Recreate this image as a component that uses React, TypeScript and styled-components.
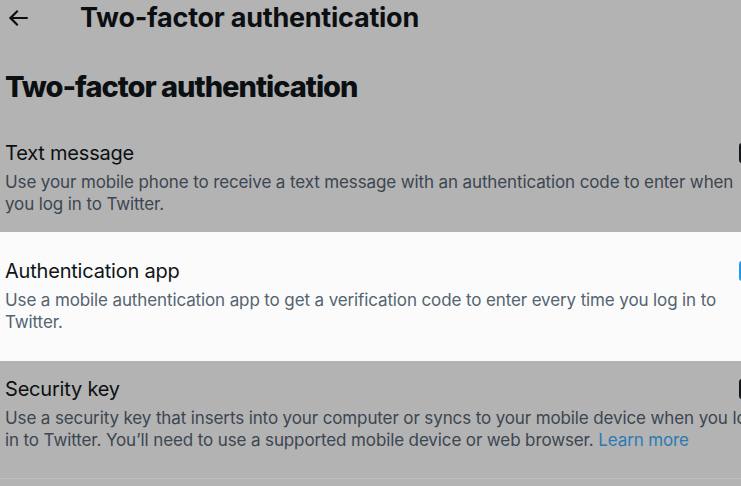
import styled, { createGlobalStyle } from 'styled-components'

const GlobalStyle = createGlobalStyle`
  html, body {
    margin: 0;
    padding: 0;
    background: #b3b3b3;
  }
  body {
    font-family: Inter, "Liberation Sans", Arial, sans-serif;
    -webkit-font-smoothing: antialiased;
  }
`

interface Method {
  title: string
  description: string
  link?: string
  checked: boolean
  highlight: boolean
}

const methods: Method[] = [
  {
    title: 'Text message',
    description:
      'Use your mobile phone to receive a text message with an authentication code to enter when you log in to Twitter.',
    checked: false,
    highlight: false,
  },
  {
    title: 'Authentication app',
    description:
      'Use a mobile authentication app to get a verification code to enter every time you log in to Twitter.',
    checked: true,
    highlight: true,
  },
  {
    title: 'Security key',
    description:
      'Use a security key that inserts into your computer or syncs to your mobile device when you log in to Twitter. You’ll need to use a supported mobile device or web browser.',
    link: 'Learn more',
    checked: false,
    highlight: false,
  },
]

const BackArrow = () => (
  <svg width="26" height="26" viewBox="0 0 24 24" aria-hidden="true">
    <path
      fill="#0c0f12"
      d="M7.414 13l5.043 5.04-1.414 1.42L3.586 12l7.457-7.46 1.414 1.42L7.414 11H21v2H7.414z"
    />
  </svg>
)

export default function App() {
  return (
    <Frame>
      <GlobalStyle />
      <Page>
        <TopBar>
          <BackButton>
            <BackArrow />
          </BackButton>
          <TopTitle>Two-factor authentication</TopTitle>
        </TopBar>
        <Heading>Two-factor authentication</Heading>
        <List>
          {methods.map((m) => (
            <Row key={m.title} $highlight={m.highlight}>
              <TitleLine>
                <RowTitle $highlight={m.highlight}>{m.title}</RowTitle>
                <Checkbox $checked={m.checked} />
              </TitleLine>
              <Description $highlight={m.highlight}>
                {m.description}
                {m.link && (
                  <>
                    {' '}
                    <Link $highlight={m.highlight}>{m.link}</Link>
                  </>
                )}
              </Description>
            </Row>
          ))}
        </List>
      </Page>
    </Frame>
  )
}

const Frame = styled.div`
  width: 741px;
  height: 486px;
  overflow: hidden;
  background: #b3b3b3;
`

const Page = styled.div`
  width: 766px;
`

const TopBar = styled.header`
  display: flex;
  align-items: center;
  height: 36px;
`

const BackButton = styled.div`
  display: flex;
  align-items: center;
  width: 26px;
  height: 26px;
  margin-left: 5px;
  margin-right: 49px;
`

const TopTitle = styled.h1`
  margin: 0;
  font-size: 27px;
  line-height: 36px;
  font-weight: 700;
  letter-spacing: -0.25px;
  color: #0c0f12;
`

const Heading = styled.h2`
  margin: 33px 0 20px 5px;
  font-size: 29px;
  line-height: 36px;
  font-weight: 800;
  letter-spacing: -1px;
  color: #0c0f12;
`

const List = styled.div`
  display: flex;
  flex-direction: column;
  padding-bottom: 10px;
  border-bottom: 1px solid #bebebe;
`

const Row = styled.div<{ $highlight: boolean }>`
  display: flex;
  flex-direction: column;
  gap: 6px;
  padding: ${(p) => (p.$highlight ? '27px 0 28px 5px' : '16px 0 17px 5px')};
  background: ${(p) => (p.$highlight ? '#fbfbfb' : 'transparent')};
`

const TitleLine = styled.div`
  display: flex;
  align-items: center;
  justify-content: space-between;
  height: 24px;
  width: 754px;
`

const RowTitle = styled.span<{ $highlight: boolean }>`
  font-size: 20px;
  line-height: 24px;
  letter-spacing: -0.2px;
  color: ${(p) => (p.$highlight ? '#0f1419' : '#0c0f12')};
`

const Checkbox = styled.span<{ $checked: boolean }>`
  box-sizing: border-box;
  width: 20px;
  height: 20px;
  border-radius: 3px;
  border: 2px solid ${(p) => (p.$checked ? '#1d9bf0' : '#15181b')};
  background: ${(p) => (p.$checked ? '#1d9bf0' : 'transparent')};
`

const Description = styled.p<{ $highlight: boolean }>`
  margin: 0;
  width: 760px;
  font-size: 17px;
  line-height: 22px;
  letter-spacing: -0.12px;
  color: ${(p) => (p.$highlight ? '#536471' : '#3b4651')};
`

const Link = styled.span<{ $highlight: boolean }>`
  color: ${(p) => (p.$highlight ? '#1d9bf0' : '#2b7ab4')};
`
